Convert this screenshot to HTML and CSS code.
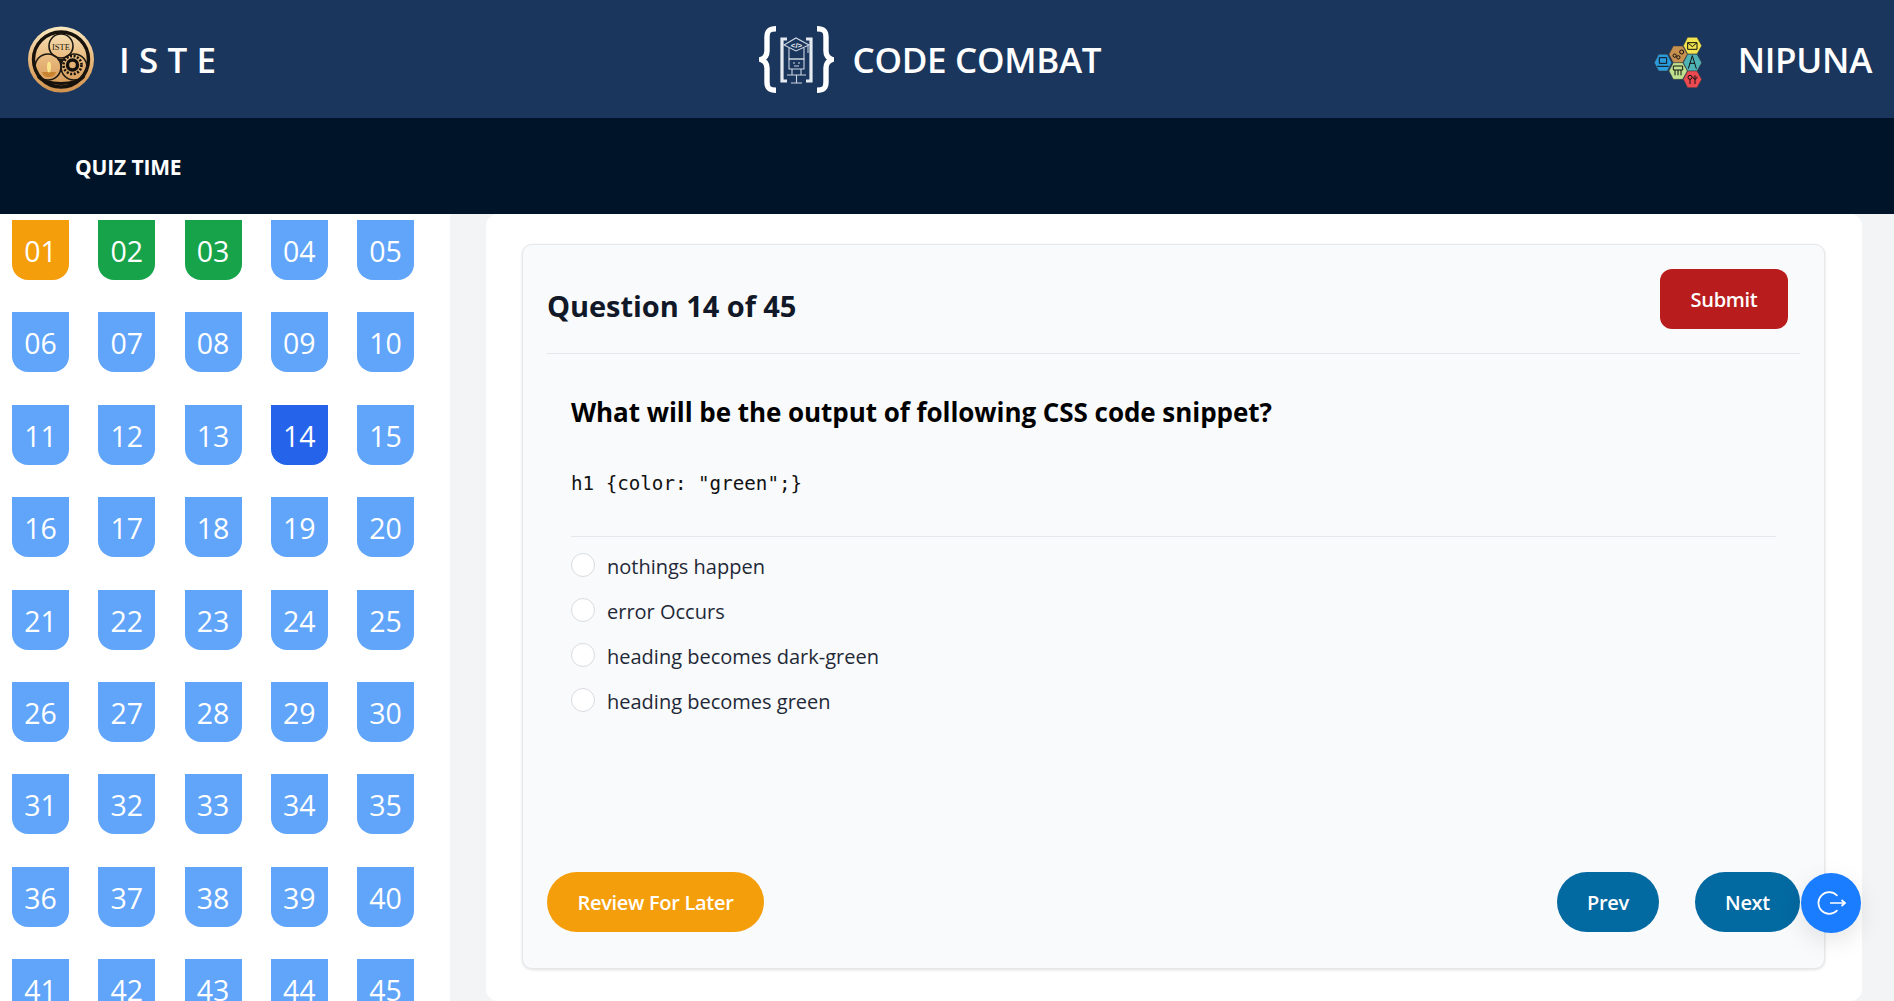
FILE: index.html
```html
<!DOCTYPE html>
<html lang="en">
  <head>
    <meta charset="UTF-8" />
    <meta name="viewport" content="width=device-width, initial-scale=1.0" />
    <title>Code Combat - Quiz Time</title>
    <link rel="stylesheet" href="styles.css">
  </head>
  <body>
    <header class="topbar">
      <div class="brand brand-left">
        <svg class="logo-iste" viewBox="0 0 66 67" aria-hidden="true">
          <defs>
            <linearGradient id="gold" x1="0" y1="0" x2="0" y2="1">
              <stop offset="0" stop-color="#f8e8c0" />
              <stop offset="0.5" stop-color="#e8b87c" />
              <stop offset="1" stop-color="#d0914e" />
            </linearGradient>
          </defs>
          <circle cx="33" cy="33.500" r="33" fill="url(#gold)" />
          <circle cx="33" cy="33.500" r="27.500" fill="none" stroke="#17120c" stroke-width="3.400" />
          <g fill="none" stroke="#1d1812" stroke-width="1.600">
            <circle cx="33" cy="20" r="12" />
            <circle cx="20" cy="41" r="13" />
            <circle cx="46" cy="41" r="13" />
          </g>
          <text class="logo-iste-text" x="33" y="23.500" text-anchor="middle">ISTE</text>
          <path d="M29 33 L37 33 L33 37 Z" fill="#1d1812" />
          <path d="M14 46 H28 C27 50 24 51 21 51 C18 51 15 50 14 46 Z" fill="#c9822f" />
          <ellipse cx="21" cy="41" rx="2" ry="5.500" fill="#fbe58a" />
          <circle cx="44.500" cy="39" r="5" fill="none" stroke="#14100b" stroke-width="3.400" />
          <circle cx="44.500" cy="39" r="9" fill="none" stroke="#14100b" stroke-width="2.600" stroke-dasharray="2 1.600" />
          <path d="M10 50 C16 60 50 60 56 50" fill="none" stroke="#17120c" stroke-width="3" />
        </svg>
        <span class="brand-iste">I S T E</span>
      </div>
      <div class="brand brand-center">
        <svg class="logo-combat" viewBox="0 0 75 67" aria-hidden="true">
          <g fill="none" stroke="#fff" stroke-width="5.400">
            <path d="M17 2.700 C10 2.700 8 5 8 11 V25 C8 30 6 32 2 33.500 C6 35 8 37 8 42 V56 C8 62 10 64.300 17 64.300" />
            <path d="M58 2.700 C65 2.700 67 5 67 11 V25 C67 30 69 32 73 33.500 C69 35 67 37 67 42 V56 C67 62 65 64.300 58 64.300" />
          </g>
          <g fill="none" stroke="#e6ebf2" stroke-width="3.200">
            <path d="M28 13 H23 V55 H28" />
            <path d="M47 13 H52 V55 H47" />
          </g>
          <g fill="none" stroke="#cdd6e2" stroke-width="1.100">
            <path d="M25 19 L37 25 L50 19 L37 12 Z" />
            <path d="M30 22 V33 H45 V22" />
            <path d="M30 33 V43 H45 V33 Z" />
            <path d="M33 43 V49 M42 43 V49 M37.500 49 V57 M28 49 H47 M32 57 H43" />
            <path d="M49 20 V27" />
            <path d="M34 37 H36 M39 37 H41 M35 40 H40" />
          </g>
          <text class="logo-combat-text" x="37.500" y="22" text-anchor="middle">&lt;/&gt;</text>
        </svg>
        <span class="brand-name">CODE COMBAT</span>
      </div>
      <div class="brand brand-right">
        <svg class="logo-nipuna" viewBox="100 45 150 165" aria-hidden="true">
          <g stroke="#3a3a3a" stroke-width="1.500">
            <polygon points="104,128 117,103 143,103 156,128 143,153 117,153" fill="#2a9bdc" />
            <polygon points="148,103 161,78 189,78 203,103 189,128 161,128" fill="#c8904f" />
            <polygon points="191,77 204,52 232,52 246,77 232,102 204,102" fill="#f1e44f" />
            <polygon points="191,128 204,103 232,103 246,128 232,153 204,153" fill="#4fb3b5" />
            <polygon points="148,153 161,128 189,128 203,153 189,178 161,178" fill="#bfe08c" />
            <polygon points="191,178 204,153 232,153 246,178 232,203 204,203" fill="#ec4a50" />
          </g>
          <g fill="none" stroke="#111" stroke-width="3">
            <path d="M119 113 H141 V130 H119 Z M113 139 H147" />
            <circle cx="165" cy="107" r="5" />
            <circle cx="176" cy="112" r="5" />
            <circle cx="186" cy="96" r="6" />
            <path d="M204 68 H232 V88 H204 Z M204 68 L218 80 L232 68" />
            <path d="M218 107 L206 146 M218 107 L230 146 M210 130 H226" />
            <path d="M161 138 H189 V150 H161 Z M166 150 V166 M175 150 V166 M184 150 V166" />
            <circle cx="211" cy="172" r="6" />
            <path d="M211 178 V192 M226 166 V192 M220 170 C220 180 232 180 232 170" />
          </g>
        </svg>
        <span class="brand-name brand-nipuna">NIPUNA</span>
      </div>
    </header>

    <nav class="subbar">QUIZ TIME</nav>

    <div class="layout">
      <aside class="sidebar">
        <div class="question-grid">
          <button class="qbtn review">01</button>
          <button class="qbtn answered">02</button>
          <button class="qbtn answered">03</button>
          <button class="qbtn">04</button>
          <button class="qbtn">05</button>
          <button class="qbtn">06</button>
          <button class="qbtn">07</button>
          <button class="qbtn">08</button>
          <button class="qbtn">09</button>
          <button class="qbtn">10</button>
          <button class="qbtn">11</button>
          <button class="qbtn">12</button>
          <button class="qbtn">13</button>
          <button class="qbtn current">14</button>
          <button class="qbtn">15</button>
          <button class="qbtn">16</button>
          <button class="qbtn">17</button>
          <button class="qbtn">18</button>
          <button class="qbtn">19</button>
          <button class="qbtn">20</button>
          <button class="qbtn">21</button>
          <button class="qbtn">22</button>
          <button class="qbtn">23</button>
          <button class="qbtn">24</button>
          <button class="qbtn">25</button>
          <button class="qbtn">26</button>
          <button class="qbtn">27</button>
          <button class="qbtn">28</button>
          <button class="qbtn">29</button>
          <button class="qbtn">30</button>
          <button class="qbtn">31</button>
          <button class="qbtn">32</button>
          <button class="qbtn">33</button>
          <button class="qbtn">34</button>
          <button class="qbtn">35</button>
          <button class="qbtn">36</button>
          <button class="qbtn">37</button>
          <button class="qbtn">38</button>
          <button class="qbtn">39</button>
          <button class="qbtn">40</button>
          <button class="qbtn">41</button>
          <button class="qbtn">42</button>
          <button class="qbtn">43</button>
          <button class="qbtn">44</button>
          <button class="qbtn">45</button>
        </div>
      </aside>

      <main class="content">
        <section class="panel">
          <div class="card">
            <div class="card-head">
              <h2>Question 14 of 45</h2>
              <button class="btn btn-submit">Submit</button>
            </div>
            <div class="question">
              <h3>What will be the output of following CSS code snippet?</h3>
              <pre>h1 {color: "green";}</pre>
              <ul class="options">
                <li><span class="radio"></span>nothings happen</li>
                <li><span class="radio"></span>error Occurs</li>
                <li><span class="radio"></span>heading becomes dark-green</li>
                <li><span class="radio"></span>heading becomes green</li>
              </ul>
            </div>
            <div class="card-foot">
              <button class="btn btn-pill btn-review">Review For Later</button>
              <div class="foot-nav">
                <button class="btn btn-pill btn-nav btn-prev">Prev</button>
                <button class="btn btn-pill btn-nav btn-next">Next</button>
              </div>
            </div>
          </div>
        </section>
      </main>
    </div>

    <button class="logout" aria-label="Logout">
      <svg viewBox="0 0 32 32" aria-hidden="true">
        <path d="M21.900 8.400 A10.800 10.800 0 1 0 21.900 23.600" fill="none" stroke="#fff" stroke-width="1.700" stroke-linecap="round" />
        <path d="M15 16 H30 M26.500 13 L30 16 L26.500 19" fill="none" stroke="#fff" stroke-width="1.700" />
      </svg>
    </button>
  </body>
</html>
```

FILE: styles.css
```css
* {
  box-sizing: border-box;
}
html,
body {
  height: 100%;
}
body {
  margin: 0;
  overflow: hidden;
  font-family: "Open Sans", "Noto Sans", sans-serif;
  background-color: #f3f4f6;
}
button {
  font-family: inherit;
  border: none;
  cursor: pointer;
}

/* top header */
.topbar {
  height: 118px;
  padding: 0 22px 0 28px;
  display: flex;
  align-items: center;
  justify-content: space-between;
  background-color: #1a365d;
  color: #fff;
}
.brand {
  display: flex;
  align-items: center;
}
.brand-center {
  margin-right: 9px;
}
.logo-iste {
  width: 66px;
  height: 67px;
  margin-right: 25px;
}
.logo-iste-text {
  font-family: "Liberation Serif", serif;
  font-size: 8.5px;
  fill: #1d1812;
}
.logo-combat {
  width: 75px;
  height: 67px;
  margin-right: 19px;
}
.logo-combat-text {
  font-family: "Liberation Sans", sans-serif;
  font-size: 8px;
  font-weight: 700;
  fill: #e6ebf2;
}
.logo-nipuna {
  width: 50px;
  height: 55px;
  margin: 7px 35px 0 0;
}
.brand-iste {
  margin-top: 1px;
  font-size: 35px;
  font-weight: 600;
  letter-spacing: 0.1px;
}
.brand-name {
  margin-top: 1px;
  font-size: 35px;
  font-weight: 600;
  letter-spacing: -0.3px;
}

/* quiz time bar */
.subbar {
  height: 96px;
  padding: 2px 0 0 75px;
  display: flex;
  align-items: center;
  background-color: #001429;
  color: #fff;
  font-size: 21px;
  font-weight: 700;
  letter-spacing: -0.15px;
}

.layout {
  height: 787px;
  display: flex;
}

/* question number grid */
.sidebar {
  width: 450px;
  padding: 6px 0 0 12px;
  overflow: hidden;
  background-color: #fff;
}
.question-grid {
  width: 402px;
  display: grid;
  grid-template-columns: repeat(5, 57px);
  justify-content: space-between;
  grid-auto-rows: 60px;
  row-gap: 32.4px;
}
.qbtn {
  padding: 2px 0 0;
  color: #fff;
  font-size: 28.5px;
  background-color: #60a5fa;
  border-radius: 0 0 16px 16px;
}
.qbtn.review {
  background-color: #f59e0b;
}
.qbtn.answered {
  background-color: #16a34a;
}
.qbtn.current {
  background-color: #2563eb;
}

/* main content */
.content {
  flex: 1;
  padding: 0 32px 0 36px;
}
.panel {
  height: 100%;
  padding: 30px 37px 0 36px;
  background-color: #fff;
  border-radius: 12px;
}
.card {
  height: 725px;
  padding: 24px 24px 36px;
  display: flex;
  flex-direction: column;
  background-color: #f9fafb;
  border: 1px solid #e5e7eb;
  border-radius: 10px;
  box-shadow: 0 1px 3px rgba(0, 0, 0, 0.12);
}
.card-head {
  padding: 0 12px 24px 0;
  display: flex;
  justify-content: space-between;
  border-bottom: 1px solid #e5e7eb;
}
.card-head h2 {
  margin: 17px 0 0;
  color: #111827;
  font-size: 29px;
  line-height: 40px;
  font-weight: 700;
  letter-spacing: -0.05px;
}
.question {
  padding: 0 24px;
}
.question h3 {
  margin: 40px 0 0;
  color: #000;
  font-size: 26px;
  line-height: 36px;
  font-weight: 700;
  letter-spacing: -0.05px;
}
.question pre {
  margin: 41px 0 0;
  padding-bottom: 39px;
  color: #111;
  font-family: "DejaVu Sans Mono", monospace;
  font-size: 19.2px;
  line-height: 26px;
  border-bottom: 1px solid #e5e7eb;
}
.options {
  margin: 16px 0 0;
  padding: 0;
  list-style: none;
}
.options li {
  height: 45px;
  display: flex;
  align-items: flex-start;
  color: #1f2937;
  font-size: 20px;
  line-height: 28px;
}
.radio {
  width: 24px;
  height: 24px;
  margin-right: 12px;
  flex: none;
  background-color: #fff;
  border: 1px solid #d9dbdf;
  border-radius: 50%;
}
.card-foot {
  margin-top: auto;
  display: flex;
  justify-content: space-between;
}
.foot-nav {
  display: flex;
  gap: 36px;
}
.btn {
  height: 60px;
  color: #fff;
  font-size: 20px;
  font-weight: 600;
  letter-spacing: -0.3px;
}
.btn-submit {
  width: 128px;
  background-color: #b91c1c;
  border-radius: 12px;
}
.btn-pill {
  border-radius: 30px;
}
.btn-review {
  width: 217px;
  background-color: #f59e0b;
}
.btn-nav {
  background-color: #0369a1;
}
.btn-prev {
  width: 102px;
}
.btn-next {
  width: 105px;
}

/* floating logout button */
.logout {
  position: fixed;
  left: 1801px;
  top: 873px;
  width: 60px;
  height: 60px;
  padding: 0;
  display: flex;
  align-items: center;
  justify-content: center;
  background-color: #1a7dff;
  border-radius: 50%;
  box-shadow: 0 8px 24px rgba(0, 0, 0, 0.1);
}
.logout svg {
  width: 32px;
  height: 32px;
}
```
